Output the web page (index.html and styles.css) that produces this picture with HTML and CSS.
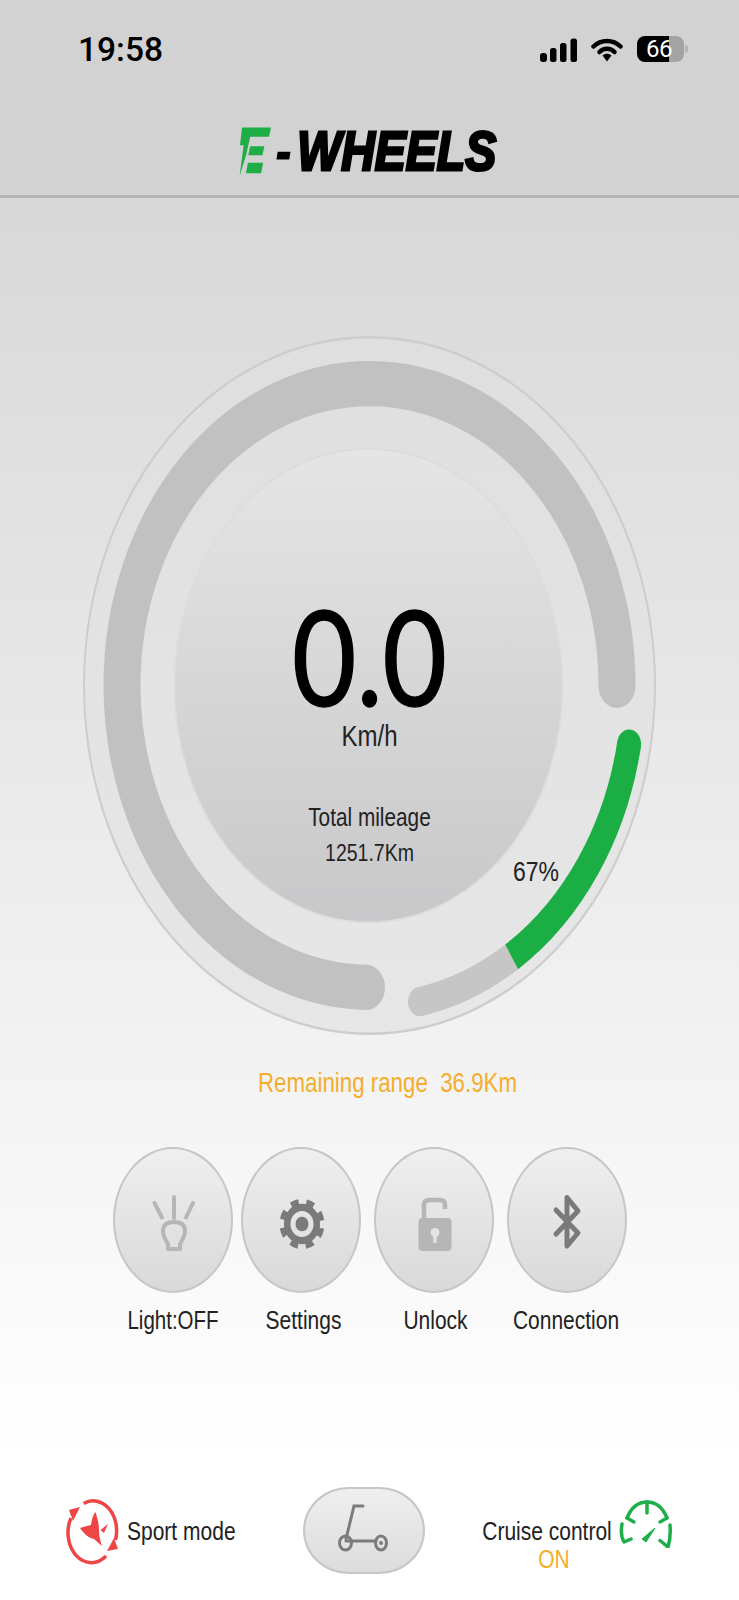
FILE: index.html
```html
<!DOCTYPE html>
<html lang="en">
<head>
<meta charset="utf-8">
<title>E-Wheels</title>
<link rel="stylesheet" href="styles.css">
</head>
<body>
<div class="app">
  <header class="header">
    <div class="status">
      <span class="time">19:58</span>
      <div class="status-icons">
        <svg class="signal" width="37" height="24" viewBox="0 0 37 24"><rect x="0" y="15" width="7" height="9" rx="3"/><rect x="10" y="10" width="6.500" height="14" rx="2.500"/><rect x="20" y="5" width="6.500" height="19" rx="2.500"/><rect x="30.500" y="0.500" width="6.500" height="23.500" rx="2.500"/></svg>
        <svg class="wifi" width="32" height="25" viewBox="0 0 32 25"><path d="M2.500 9.500C10 2 22 2 29.500 9.500" fill="none" stroke="#000" stroke-width="4.500" stroke-linecap="round"/><path d="M8.500 15C12.500 10.800 19.500 10.800 23.500 15" fill="none" stroke="#000" stroke-width="4.500" stroke-linecap="round"/><path d="M11.500 18.500C14 16 18 16 20.500 18.500L16 24.500Z"/></svg>
        <div class="battery"><span class="battery-num">66</span></div>
      </div>
    </div>
    <div class="logo">
      <svg class="logo-mark" width="33" height="51" viewBox="28 45 100 152"><polygon points="37,48 125,48 119,76 62,76 50,130 30,195 42,102 31,102"/><polygon points="62,105 105,105 99,132 56,132"/><polygon points="55,155 101,155 95,187 49,187"/></svg>
      <span class="logo-text"><span class="logo-dash">-</span>WHEELS</span>
    </div>
  </header>

  <main class="main">
    <section class="gauge">
      <svg class="gauge-art" viewBox="-286.500 -286.500 573 573" preserveAspectRatio="none">
        <defs>
          <linearGradient id="plate" x1="0" y1="0" x2="0" y2="1"><stop offset="0" stop-color="#dfdfdf"/><stop offset="1" stop-color="#e7e7e7"/></linearGradient>
          <linearGradient id="disc" x1="0" y1="0" x2="0" y2="1"><stop offset="0" stop-color="#e5e5e5"/><stop offset="1" stop-color="#c8c8ca"/></linearGradient>
        </defs>
        <circle r="285.500" fill="url(#plate)" stroke="#cdcdcd" stroke-width="2"/>
        <path d="M-3 247.500A247.500 247.500 0 1 1 247.500 0" fill="none" stroke="#c1c1c1" stroke-width="37" stroke-linecap="round"/>
        <circle cx="-1" r="194" fill="url(#disc)" stroke="#dcdcdc" stroke-width="1.500"/>
        <path d="M50.400 259.100A264 264 0 0 0 142.200 222.400" fill="none" stroke="#c6c6c6" stroke-width="24" stroke-linecap="round"/>
        <path d="M142.200 222.400A264 264 0 0 0 259.600 48" fill="none" stroke="#1aae44" stroke-width="24"/>
        <circle cx="259.600" cy="48" r="12" fill="#1aae44"/>
      </svg>
      <div class="readout">
        <span class="speed">0.0</span>
        <span class="unit">Km/h</span>
        <span class="mileage-label">Total mileage</span>
        <span class="mileage-value">1251.7Km</span>
      </div>
      <span class="percent">67%</span>
    </section>

    <p class="range">Remaining range&nbsp; 36.9Km</p>

    <section class="controls">
      <div class="control control-light">
        <div class="round-btn">
          <svg width="120" height="146" viewBox="0 0 120 146"><g fill="none" stroke="#b6b6b6" stroke-width="4" stroke-linejoin="round" stroke-linecap="round"><path d="M41.500 56L49 70.500"/><path d="M61 50V71"/><path d="M80 56L73 70.500"/><path d="M55 102V97C52 92 50 89 50 84C50 78 54 75 61 75C68 75 72 78 72 84C72 89 70 92 67 97V102Z"/></g></svg>
        </div>
        <span class="control-label">Light:OFF</span>
      </div>
      <div class="control control-settings">
        <div class="round-btn">
          <svg width="120" height="146" viewBox="0 0 120 146"><g transform="translate(61 77) scale(1 1.120)" fill="none" stroke="#7a7a7a"><circle r="19.500" stroke-width="6" stroke-dasharray="7.800 7.510" transform="rotate(11)"/><circle r="14.800" stroke-width="6.500"/><circle r="6.500" fill="#7a7a7a" stroke="none"/></g></svg>
        </div>
        <span class="control-label">Settings</span>
      </div>
      <div class="control control-unlock">
        <div class="round-btn">
          <svg width="120" height="146" viewBox="0 0 120 146"><path d="M50 72V58Q50 53 56 53H66Q71 53 71 58V62" fill="none" stroke="#b6b6b6" stroke-width="4.500"/><rect x="44.500" y="71" width="33" height="33" rx="4" fill="#b6b6b6"/><circle cx="61" cy="85.500" r="4.500" fill="#e4e4e4"/><path d="M59 87H63L62.500 96H59.500Z" fill="#e4e4e4"/></svg>
        </div>
        <span class="control-label">Unlock</span>
      </div>
      <div class="control control-link">
        <div class="round-btn">
          <svg width="120" height="146" viewBox="0 0 120 146"><path d="M49 63L71 86L60 99V50.500L71 64L49 87" fill="none" stroke="#7a7a7a" stroke-width="5" stroke-linejoin="round" stroke-linecap="round"/></svg>
        </div>
        <span class="control-label">Connection</span>
      </div>
    </section>
  </main>

  <footer class="bar">
    <div class="sport">
      <svg class="sport-icon" width="60" height="80" viewBox="0 0 60 80"><g fill="none" stroke="#ee4545" stroke-width="3.500"><path d="M21.700 13.500A23.300 30 0 0 1 53.500 50"/><path d="M9 28A23.300 30 0 0 0 44 66"/></g><g fill="#ee4545"><polygon points="45,61 56,59 52,48"/><polygon points="7,20 18,17 11,31"/><path d="M33.500 22C30 26 30 31 29 35C25 36 21 37 18 38C22 44 27 48 32 49L40 56C38 50 37 46 37 40C37 33 35 27 33.500 22Z"/><polygon points="38.500,40 46,34 42,43"/></g></svg>
      <span class="bar-text">Sport mode</span>
    </div>
    <div class="scooter-btn">
      <svg width="122" height="87" viewBox="0 0 122 87"><g fill="none" stroke="#7c7c7c" stroke-width="3" stroke-linecap="round"><path d="M60 19H51L43 52"/><path d="M43 54H73"/><ellipse cx="42.500" cy="56" rx="6" ry="7"/><ellipse cx="78" cy="56" rx="5.500" ry="7"/></g><circle cx="78" cy="56" r="2" fill="#7c7c7c"/></svg>
    </div>
    <div class="cruise">
      <div class="cruise-text">
        <span class="bar-text">Cruise control</span>
        <span class="cruise-state">ON</span>
      </div>
      <svg class="cruise-icon" width="54" height="50" viewBox="8 8 54 50"><g fill="none" stroke="#1eae4a" stroke-width="3.500" stroke-linecap="round" stroke-linejoin="round"><path d="M17 28C21 18 28 12 37 12C46 12 53 18 57 28"/><path d="M37 12V23"/><path d="M17 28L24 32"/><path d="M57 28L50 32"/><path d="M12 34Q10 45 14 52L21 49"/><path d="M60 35Q61 47 58 57L50 50.500"/></g><polygon points="45,38 32,49 36,52" fill="#1eae4a" stroke="#1eae4a" stroke-linejoin="round"/></svg>
    </div>
  </footer>
</div>
</body>
</html>
```

FILE: styles.css
```css
* { box-sizing: border-box; }
html, body { margin: 0; padding: 0; }
body { font-family: "Liberation Sans", Arial, sans-serif; color: #222; background: #fff; }
svg { display: block; }

.app { width: 739px; height: 1600px; display: flex; flex-direction: column; overflow: hidden; }

.header { height: 198px; background: #d2d2d2; border-bottom: 3px solid #b5b5b5; }
.status { height: 62px; padding: 37px 55px 0 78px; display: flex; justify-content: space-between; align-items: flex-start; }
.time { font-family: Roboto, sans-serif; font-weight: 500; font-size: 33.500px; line-height: 26px; color: #000; }
.status-icons { display: flex; align-items: center; gap: 14px; margin-top: -1px; }
.signal { fill: #000; margin-top: 2px; }
.wifi { fill: #000; margin-top: 1px; }
.battery { position: relative; width: 47px; height: 26px; border-radius: 8px; background: linear-gradient(90deg, #000 68%, #a3a3a3 68%); display: flex; align-items: center; padding-left: 9px; }
.battery::after { content: ""; position: absolute; left: 48px; top: 9px; width: 3px; height: 8px; border-radius: 0 3px 3px 0; background: #b5b5b5; }
.battery-num { font-family: Roboto, sans-serif; font-weight: 400; font-size: 24px; line-height: 26px; color: #fff; letter-spacing: -0.500px; }

.logo { margin-top: 64px; padding-right: 4px; display: flex; justify-content: center; align-items: flex-start; gap: 4px; }
.logo-mark { fill: #1fae45; }
.logo-text { font-weight: 700; font-style: italic; font-size: 46.500px; line-height: 44px; color: #000; -webkit-text-stroke: 2.500px #000; transform: scaleY(1.180); margin-top: 3px; }
.logo-dash { letter-spacing: 6px; -webkit-text-stroke: 1px #000; }

.main { flex: 1; display: flex; flex-direction: column; background: linear-gradient(180deg, #d8d8d8 0%, #ffffff 100%); padding-top: 138px; }

.gauge { position: relative; width: 573px; height: 699px; margin: 0 auto; flex: none; }
.gauge-art { width: 573px; height: 699px; }
.readout { position: absolute; inset: 0; display: flex; flex-direction: column; align-items: center; padding-top: 274px; }
.speed { font-family: Lato, "Liberation Sans", sans-serif; font-size: 111px; line-height: 90px; color: #000; -webkit-text-stroke: 1.200px #000; transform: scaleY(1.180); }
.unit { font-size: 24px; line-height: 24px; margin-top: 23.500px; transform: scaleY(1.220); }
.mileage-label { font-size: 20.800px; line-height: 24px; margin-top: 57.500px; transform: scaleY(1.220); }
.mileage-value { font-size: 19.500px; line-height: 24px; margin-top: 11px; transform: scaleY(1.220); }
.percent { position: absolute; left: 430px; top: 522px; font-size: 23px; line-height: 26px; transform: scaleY(1.220); }

.range { margin: 34px 0 0; padding-left: 36px; text-align: center; font-size: 22.300px; line-height: 28px; color: #f5ad2d; transform: scaleY(1.220); }

.controls { display: flex; margin-top: 50px; padding-left: 113px; }
.control { width: 120px; display: flex; flex-direction: column; align-items: center; }
.control-settings { margin-left: 7.500px; }
.control-unlock { margin-left: 13px; }
.control-link { margin-left: 13.500px; }
.round-btn { width: 120px; height: 146px; border-radius: 50%; border: 2px solid #c6c6c6; background: linear-gradient(180deg, #efefef, #d9d9d9); flex: none; }
.round-btn svg { margin: -2px; }
.control-label { font-size: 21px; line-height: 24px; margin-top: 15px; white-space: nowrap; transform: scaleY(1.220); }
.control-light .control-label { font-size: 20.500px; }
.control-settings .control-label { padding-left: 6px; }
.control-unlock .control-label { padding-left: 4px; }
.control-link .control-label { padding-right: 2px; }

.bar { height: 138px; background: #fff; display: flex; align-items: flex-start; padding: 25px 0 0 62px; flex: none; }
.sport { display: flex; align-items: center; width: 174px; margin-top: 3px; }
.sport-icon { margin-right: 5px; flex: none; }
.sport .bar-text { margin-top: 2px; }
.bar-text { font-size: 21px; line-height: 24px; white-space: nowrap; display: block; transform: scaleY(1.220); }
.scooter-btn { width: 122px; height: 87px; margin-left: 67px; border-radius: 46px / 44px; border: 2px solid #c6c6c6; background: linear-gradient(180deg, #efefef, #dcdcdc); flex: none; }
.scooter-btn svg { margin: -2px; }
.cruise { display: flex; margin-left: 58px; align-items: flex-start; }
.cruise-text { display: flex; flex-direction: column; align-items: center; padding-top: 32px; width: 135px; padding-right: 7px; }
.cruise-state { font-size: 21px; line-height: 24px; margin-top: 4px; margin-left: 14px; color: #f5ad2d; transform: scaleY(1.220); }
.cruise-icon { margin-top: 11px; flex: none; }
```
